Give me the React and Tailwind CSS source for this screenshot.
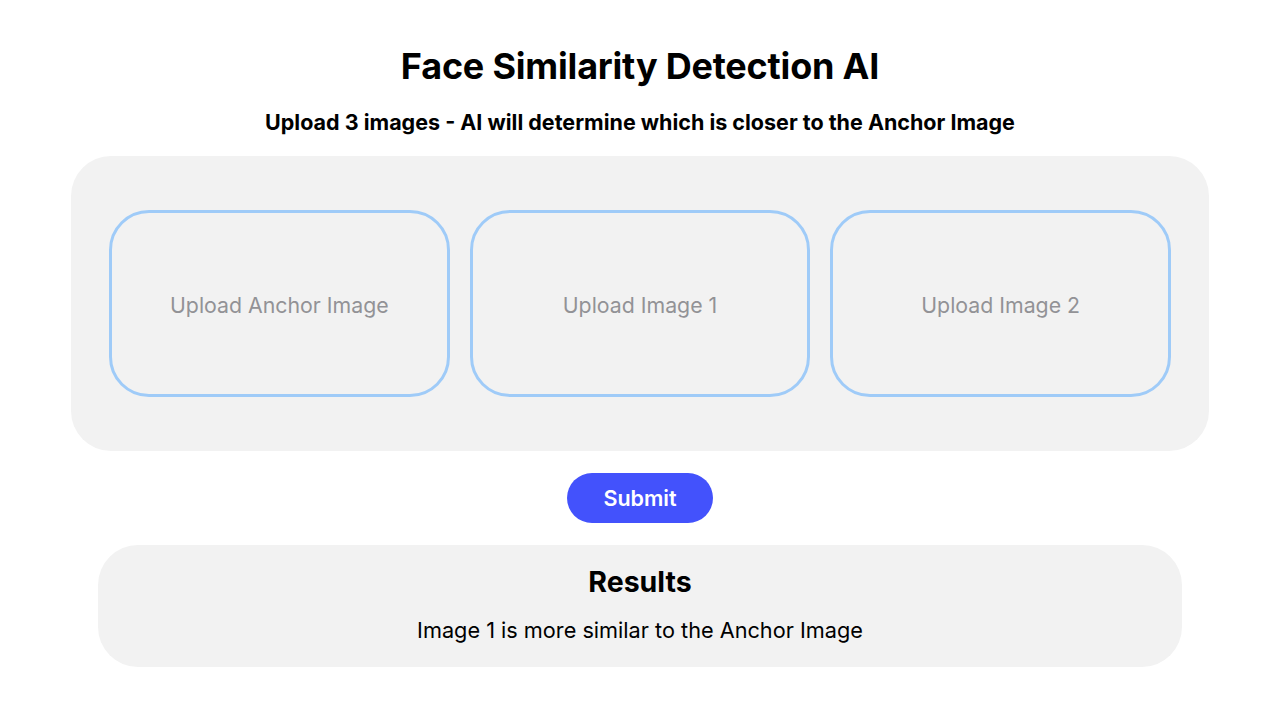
export default function App() {
  const slots = ['Upload Anchor Image', 'Upload Image 1', 'Upload Image 2'];

  return (
    <div className="min-h-screen bg-white flex flex-col items-center font-['Inter',sans-serif] text-black">
      {/* header */}
      <h1 className="mt-[44px] text-[36px] leading-[44px] font-bold tracking-[-0.2px]">
        Face Similarity Detection AI
      </h1>
      <p className="mt-[20px] text-[21.5px] leading-[28px] font-bold">
        Upload 3 images - AI will determine which is closer to the Anchor Image
      </p>

      {/* upload panel */}
      <div className="mt-[20px] w-[1138px] h-[295px] rounded-[40px] bg-[#f2f2f2] px-[38px] pt-[54px] flex gap-[20px] items-start">
        {slots.map((label) => (
          <button
            key={label}
            className="flex-1 h-[187px] rounded-[40px] border-[3px] border-[#9fcbf8] flex items-center justify-center pt-[4px] text-[21.3px] text-[#929296]"
          >
            {label}
          </button>
        ))}
      </div>

      <button className="mt-[22px] w-[146px] h-[50px] rounded-full bg-[#4352fc] text-white text-[21.5px] font-semibold">
        Submit
      </button>

      {/* results */}
      <div className="mt-[22px] w-[1084px] h-[122px] rounded-[40px] bg-[#f2f2f2] flex flex-col items-center pt-[19px]">
        <h2 className="text-[28.5px] leading-[36px] font-bold">Results</h2>
        <p className="mt-[16px] text-[21.7px] leading-[28px]">Image 1 is more similar to the Anchor Image</p>
      </div>
    </div>
  );
}
